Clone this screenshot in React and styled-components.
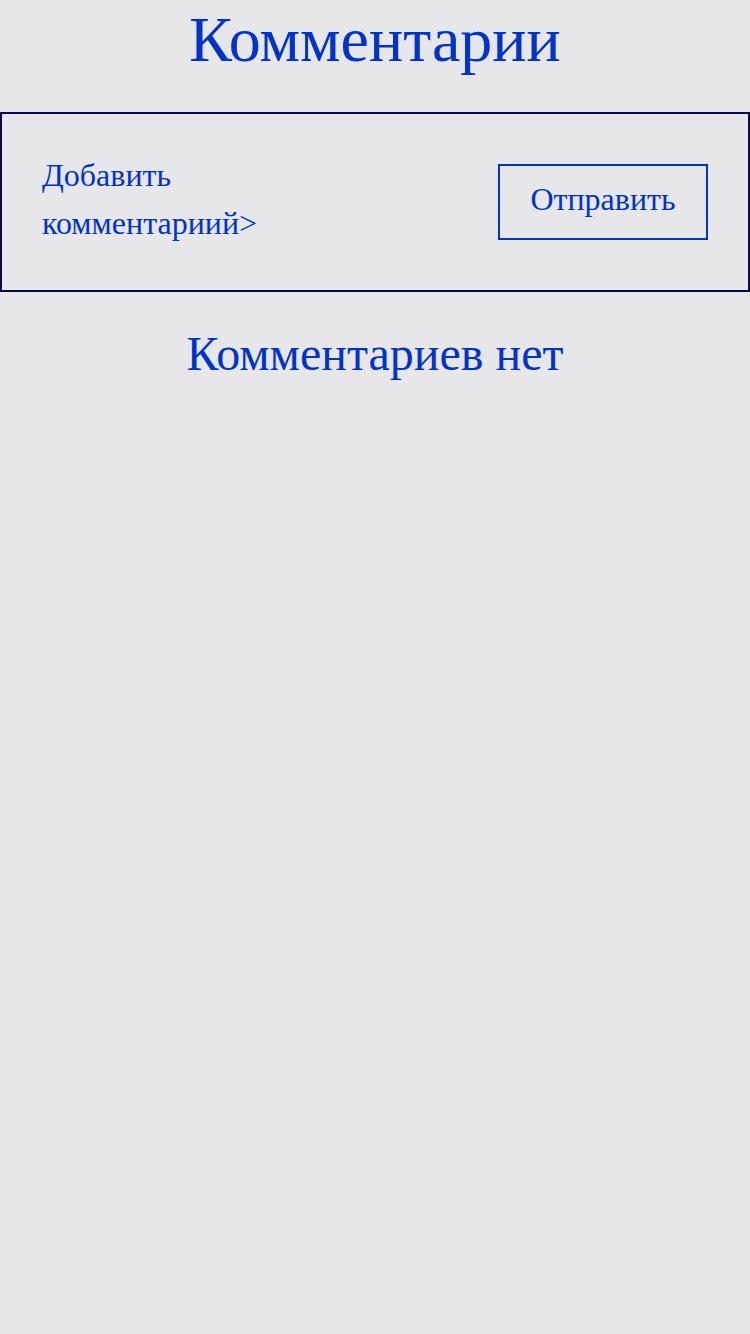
import styled, { createGlobalStyle } from "styled-components";

const GlobalStyle = createGlobalStyle`
  html, body {
    margin: 0;
    padding: 0;
    background-color: #e7e7ea;
  }
  body {
    font-family: "Liberation Serif", "Times New Roman", serif;
    color: #0033cc;
  }
  #root {
    min-height: 1334px;
  }
`;

export default function App() {
  return (
    <Page>
      <GlobalStyle />
      <Title>Комментарии</Title>
      <CommentForm>
        <AddLink>
          Добавить
          <br />
          комментариий&gt;
        </AddLink>
        <SendButton>Отправить</SendButton>
      </CommentForm>
      <Empty>Комментариев нет</Empty>
    </Page>
  );
}

const Page = styled.div`
  display: flex;
  flex-direction: column;
  width: 750px;
`;

const Title = styled.h1`
  margin: 0;
  height: 112px;
  text-align: center;
  font-size: 64px;
  font-weight: normal;
  line-height: 80px;
`;

const CommentForm = styled.div`
  box-sizing: border-box;
  display: flex;
  align-items: center;
  justify-content: space-between;
  height: 180px;
  padding: 0 40px;
  border: 2px solid #0a0a4a;
`;

const AddLink = styled.p`
  margin: 0 0 6px;
  font-size: 32px;
  line-height: 48px;
  color: #0033cc;
`;

const SendButton = styled.button`
  box-sizing: border-box;
  width: 210px;
  height: 76px;
  background: transparent;
  border: 2px solid #0033cc;
  color: #0033cc;
  font-family: "Liberation Serif", "Times New Roman", serif;
  font-size: 32px;
  padding: 0 0 6px;
`;

const Empty = styled.h2`
  margin: 0;
  padding-top: 27px;
  text-align: center;
  font-size: 48px;
  font-weight: normal;
  line-height: 70px;
`;
